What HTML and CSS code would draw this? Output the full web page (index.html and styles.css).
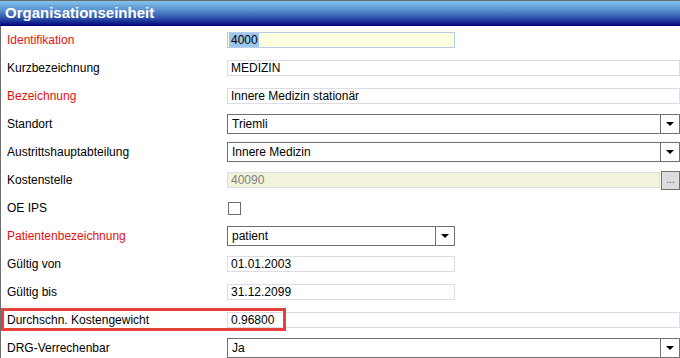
FILE: index.html
```html
<!DOCTYPE html>
<html lang="de">
<head>
  <meta charset="UTF-8" />
  <title>Organisationseinheit</title>
  <link rel="stylesheet" href="styles.css">
</head>
<body>
  <div class="panel">
    <div class="panel-title">Organisationseinheit</div>
    <div class="form">
      <div class="row">
        <div class="label required">Identifikation</div>
        <div class="field"><div class="input short focus"><span class="sel">4000</span></div></div>
      </div>
      <div class="row">
        <div class="label">Kurzbezeichnung</div>
        <div class="field"><div class="input">MEDIZIN</div></div>
      </div>
      <div class="row">
        <div class="label required">Bezeichnung</div>
        <div class="field"><div class="input">Innere Medizin stationär</div></div>
      </div>
      <div class="row">
        <div class="label">Standort</div>
        <div class="field"><div class="select"><span class="val">Triemli</span><span class="arrow"></span></div></div>
      </div>
      <div class="row">
        <div class="label">Austrittshauptabteilung</div>
        <div class="field"><div class="select"><span class="val">Innere Medizin</span><span class="arrow"></span></div></div>
      </div>
      <div class="row">
        <div class="label">Kostenstelle</div>
        <div class="field lookup">
          <div class="input readonly">40090</div>
          <div class="btn-dots">...</div>
        </div>
      </div>
      <div class="row">
        <div class="label">OE IPS</div>
        <div class="field"><div class="checkbox"></div></div>
      </div>
      <div class="row">
        <div class="label required">Patientenbezeichnung</div>
        <div class="field"><div class="select short"><span class="val">patient</span><span class="arrow"></span></div></div>
      </div>
      <div class="row">
        <div class="label">Gültig von</div>
        <div class="field"><div class="input short">01.01.2003</div></div>
      </div>
      <div class="row">
        <div class="label">Gültig bis</div>
        <div class="field"><div class="input short">31.12.2099</div></div>
      </div>
      <div class="row marked">
        <div class="label">Durchschn. Kostengewicht</div>
        <div class="field"><div class="input">0.96800</div></div>
        <div class="highlight"></div>
      </div>
      <div class="row">
        <div class="label">DRG-Verrechenbar</div>
        <div class="field"><div class="select"><span class="val">Ja</span><span class="arrow"></span></div></div>
      </div>
    </div>
  </div>
</body>
</html>
```

FILE: styles.css
```css
body {
  margin: 0;
  font-family: "Liberation Sans", Arial, sans-serif;
  font-size: 12px;
  background: #fff;
  color: #000;
  overflow: hidden;
}
.panel {
  width: 680px;
  border-top: 1px solid #6b6b6b;
}
.panel-title {
  height: 25px;
  line-height: 24px;
  padding-left: 5px;
  color: #fff;
  font-weight: bold;
  font-size: 15px;
  background: linear-gradient(#82c4ec, #5a93d0 35%, #2c4ea8 70%, #00007c);
}
.form {
  border-left: 1px solid #6e6e6e;
}
.row {
  position: relative;
  display: flex;
  align-items: center;
  height: 28px;
}
.label {
  width: 220px;
  padding-left: 6px;
}
.required {
  color: #e8100c;
}
.field {
  flex: 1;
  display: flex;
  align-items: center;
}
.input {
  box-sizing: border-box;
  width: 453px;
  height: 16px;
  line-height: 14px;
  padding-left: 3px;
  border: 1px solid #dcdce4;
  background: #fff;
  white-space: nowrap;
}
.input.short {
  width: 228px;
}
.input.focus {
  border-color: #b6cde8;
  background: #ffffe0;
  padding-left: 1px;
}
.sel {
  background: #9dc6ec;
  padding: 0 1px 0 2px;
}
.input.readonly {
  width: 433px;
  background: #f3f3dc;
  color: #808080;
}
.lookup {
  gap: 1px;
}
.btn-dots {
  box-sizing: border-box;
  width: 19px;
  height: 19px;
  border: 1px solid #707070;
  background: #dcdcdc;
  color: #555;
  font-size: 10px;
  line-height: 15px;
  text-align: center;
}
.select {
  box-sizing: border-box;
  display: flex;
  width: 453px;
  height: 20px;
  border: 1px solid #707070;
  background: #fff;
}
.select.short {
  width: 228px;
}
.select .val {
  flex: 1;
  line-height: 18px;
  padding-left: 4px;
}
.select .arrow {
  position: relative;
  width: 18px;
  border-left: 1px solid #707070;
}
.select .arrow::after {
  content: "";
  position: absolute;
  left: 5px;
  top: 7px;
  border-left: 4px solid transparent;
  border-right: 4px solid transparent;
  border-top: 4px solid #000;
}
.checkbox {
  box-sizing: border-box;
  width: 13px;
  height: 13px;
  margin-left: 1px;
  border: 1px solid #6e6e6e;
  background: #fff;
}
.highlight {
  position: absolute;
  left: 0;
  top: 2px;
  width: 285px;
  height: 23px;
  box-sizing: border-box;
  border: 3px solid #e5413b;
}
```
